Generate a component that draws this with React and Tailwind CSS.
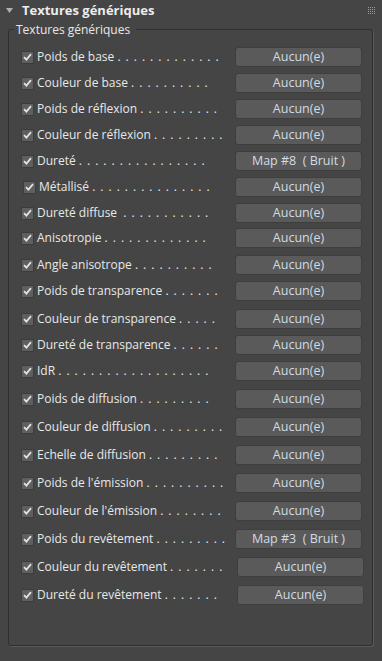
const rows = [
  { label: "Poids de base", dots: 13, value: "Aucun(e)", gap: "mt-0" },
  { label: "Couleur de base", dots: 10, value: "Aucun(e)", gap: "mt-[6px]" },
  { label: "Poids de réflexion", dots: 10, value: "Aucun(e)", gap: "mt-[6px]" },
  { label: "Couleur de réflexion", dots: 9, value: "Aucun(e)", gap: "mt-[6px]" },
  { label: "Dureté", dots: 16, value: "Map #8  ( Bruit )", gap: "mt-[6px]" },
  { label: "Métallisé", dots: 15, value: "Aucun(e)", gap: "mt-[6px]", nudge: true },
  { label: "Dureté diffuse ", dots: 11, value: "Aucun(e)", gap: "mt-[6px]" },
  { label: "Anisotropie", dots: 13, value: "Aucun(e)", gap: "mt-[5px]" },
  { label: "Angle anisotrope", dots: 10, value: "Aucun(e)", gap: "mt-[7px]" },
  { label: "Poids de transparence", dots: 7, value: "Aucun(e)", gap: "mt-[6px]" },
  { label: "Couleur de transparence", dots: 5, value: "Aucun(e)", gap: "mt-[8px]" },
  { label: "Dureté de transparence", dots: 6, value: "Aucun(e)", gap: "mt-[6px]" },
  { label: "IdR", dots: 19, value: "Aucun(e)", gap: "mt-[6px]" },
  { label: "Poids de diffusion", dots: 9, value: "Aucun(e)", gap: "mt-[8px]" },
  { label: "Couleur de diffusion", dots: 9, value: "Aucun(e)", gap: "mt-[8px]" },
  { label: "Echelle de diffusion", dots: 9, value: "Aucun(e)", gap: "mt-[8px]" },
  { label: "Poids de l'émission", dots: 10, value: "Aucun(e)", gap: "mt-[8px]" },
  { label: "Couleur de l'émission", dots: 8, value: "Aucun(e)", gap: "mt-[8px]" },
  { label: "Poids du revêtement", dots: 9, value: "Map #3  ( Bruit )", gap: "mt-[8px]" },
  { label: "Couleur du revêtement", dots: 7, value: "Aucun(e)", gap: "mt-[8px]", shift: true },
  { label: "Dureté du revêtement", dots: 7, value: "Aucun(e)", gap: "mt-[8px]", shift: true },
];

function Check() {
  return (
    <span className="flex h-[13px] w-[13px] shrink-0 items-center justify-center border border-[#3c3c3c] bg-[#5f5f5f]">
      <svg width="9" height="8" viewBox="0 0 9 8">
        <path d="M1 4.2 L3.4 6.6 L8 1.2" fill="none" stroke="#e2e2e2" strokeWidth="1.8" />
      </svg>
    </span>
  );
}

function Row({ row }) {
  return (
    <div className={`flex h-[20px] items-center ${row.gap}`}>
      <div className={`flex min-w-0 flex-1 items-center ${row.nudge ? "pl-[14px]" : "pl-[12px]"}`}>
        <Check />
        <span className="ml-[3px] whitespace-pre text-[12px] text-[#e8e8e8]">
          {row.label}{" "}
          <span className="tracking-[0.95px]">{Array(row.dots).fill(".").join(" ")}</span>
        </span>
      </div>
      <button
        className={`h-[20px] w-[127px] shrink-0 whitespace-pre rounded-[3px] border border-[#3e3e3e] bg-[#5a5a5a] text-[12.5px] text-[#d3dbe2] ${
          row.shift ? "mr-[8px]" : "mr-[10px]"
        }`}
      >
        {row.value}
      </button>
    </div>
  );
}

export default function App() {
  return (
    <div className="h-[661px] w-[382px] bg-[#454545] font-['Open_Sans','Noto_Sans',sans-serif]">
      <div className="flex h-[21px] items-center">
        <svg className="ml-[6px]" width="7" height="6" viewBox="0 0 7 6">
          <path d="M0 0 L7 0 L3.5 5 Z" fill="#b0b0b0" />
        </svg>
        <span className="ml-[9px] text-[13px] font-bold text-[#ececec]">Textures génériques</span>
        <svg className="ml-auto mr-[6px]" width="8" height="8" viewBox="0 0 8 8">
          {[0, 2, 4, 6].map((y) =>
            [0, 2, 4, 6].map((x) => <rect key={`${x}-${y}`} x={x} y={y} width="1" height="1" fill="#9a9a9a" />)
          )}
        </svg>
      </div>
      <fieldset className="ml-[8px] mr-[9px] mt-[1px] h-[624px] rounded-[3px] border border-[#2f2f2f] shadow-[1px_1px_0_#5a5a5a]">
        <legend className="ml-[5px] pl-[2px] pr-[6px] text-[12px] leading-[15px] text-[#e8e8e8]">
          Textures génériques
        </legend>
        <div className="pt-[10px]">
          {rows.map((row) => (
            <Row key={row.label} row={row} />
          ))}
        </div>
      </fieldset>
    </div>
  );
}
